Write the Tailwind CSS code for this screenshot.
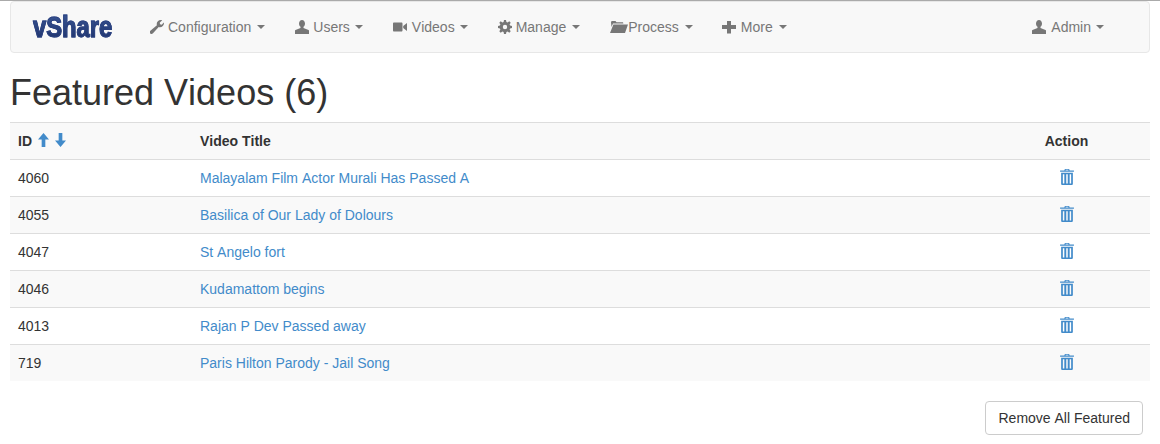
<!DOCTYPE html>
<html lang="en">
  <head>
    <meta charset="UTF-8" />
    <title>Featured Videos</title>
    <script src="https://cdn.jsdelivr.net/npm/@tailwindcss/browser@4"></script>
  </head>
  <body class="bg-white font-['Liberation_Sans',Arial,sans-serif] text-[14px] leading-[20px] text-[#333] [font-kerning:none]">
    <div class="h-px bg-[#aaaaaa]"></div>

    <!-- navbar -->
    <nav class="mx-[10px] flex h-[52px] items-center rounded-[4px] border border-[#e7e7e7] bg-[#f8f8f8] text-[#777]">
      <a class="ml-[22px] mr-[-16px] w-[97px] origin-left scale-x-[0.82] whitespace-nowrap bg-gradient-to-b from-[#3c5a9a] to-[#1c2f66] bg-clip-text text-[29px] font-bold leading-[34px] text-transparent [-webkit-text-stroke:1px_#2a4080]">vShare</a>

      <a class="ml-[36px] flex items-center">
        <svg class="mr-[4px] h-[14px] w-[14px]" viewBox="0 0 14 14" fill="#777"><path d="M14 3.200c0 2.200-1.800 4-4 4-.5 0-.9-.1-1.300-.2L3 13.200c-.8.900-2 .9-2.700.2-.7-.7-.7-1.900.1-2.600L6.900 5.200C6.800 4.800 6.700 4.400 6.700 4c0-2.200 1.800-4 4-4 .6 0 1.100.1 1.500.3L9.700 2.700l.4 1.600 1.600.4 2.100-2.300c.1.100.2.500.2.800z"/></svg>
        Configuration<span class="ml-[6px] h-0 w-0 border-x-[4px] border-t-[4px] border-x-transparent border-t-[#777]"></span>
      </a>
      <a class="ml-[30px] flex items-center">
        <svg class="mr-[4px] h-[14px] w-[14px]" viewBox="0 0 14 14" fill="#777"><path d="M4 3.600C4 1.600 5.300 0 7 0s3 1.600 3 3.600c0 1.400-.6 2.600-1.500 3.200v1.300L13.500 10c.4.200.5.500.5.900V14H0v-3.100c0-.4.100-.7.500-.9l5-1.900V6.800C4.600 6.200 4 5 4 3.600z"/></svg>
        Users<span class="ml-[5px] h-0 w-0 border-x-[4px] border-t-[4px] border-x-transparent border-t-[#777]"></span>
      </a>
      <a class="ml-[30px] flex items-center">
        <svg class="mr-[5px] h-[14px] w-[14px]" viewBox="0 0 14 14" fill="#777"><path d="M0 3.500C0 3 .4 2.500 1 2.500h7.500c.6 0 1 .5 1 1v7c0 .5-.4 1-1 1H1c-.6 0-1-.5-1-1zM10.200 6l3.800-3v8l-3.800-3z"/></svg>
        Videos<span class="ml-[5px] h-0 w-0 border-x-[4px] border-t-[4px] border-x-transparent border-t-[#777]"></span>
      </a>
      <a class="ml-[30px] flex items-center">
        <svg class="mr-[4px] h-[14px] w-[14px]" viewBox="0 0 14 14" fill="#777"><path fill-rule="evenodd" d="M6 0h2l.4 1.900 1.200.5L11.300 1.300l1.400 1.400-1.100 1.700.5 1.200L14 6v2l-1.900.4-.5 1.200 1.100 1.700-1.400 1.400-1.700-1.100-1.200.5L8 14H6l-.4-1.900-1.200-.5-1.700 1.100-1.400-1.400 1.100-1.700-.5-1.200L0 8V6l1.900-.4.500-1.200L1.300 2.700l1.400-1.400 1.700 1.100 1.200-.5zM7 4.800a2.200 2.200 0 1 0 0 4.400 2.200 2.200 0 0 0 0-4.400z"/></svg>
        Manage<span class="ml-[6px] h-0 w-0 border-x-[4px] border-t-[4px] border-x-transparent border-t-[#777]"></span>
      </a>
      <a class="ml-[30px] flex items-center">
        <svg class="h-[14px] w-[18px]" viewBox="0 0 18 14" fill="#777"><path d="M1 2.500 1.500 1h4l1 1.200H13l.4 1.300H3L1.500 7zM3.400 4.500H18L15 13H0z"/></svg>
        Process<span class="ml-[6px] h-0 w-0 border-x-[4px] border-t-[4px] border-x-transparent border-t-[#777]"></span>
      </a>
      <a class="ml-[29px] flex items-center">
        <svg class="mr-[5px] h-[14px] w-[14px]" viewBox="0 0 14 14" fill="#777"><path d="M5 1h4v4h5v4H9v4.500H5V9H0V5h5z"/></svg>
        More<span class="ml-[6px] h-0 w-0 border-x-[4px] border-t-[4px] border-x-transparent border-t-[#777]"></span>
      </a>
      <a class="ml-auto mr-[45px] flex items-center">
        <svg class="mr-[5px] h-[14px] w-[14px]" viewBox="0 0 14 14" fill="#777"><path d="M4 3.600C4 1.600 5.300 0 7 0s3 1.600 3 3.600c0 1.400-.6 2.600-1.500 3.200v1.300L13.500 10c.4.200.5.500.5.900V14H0v-3.100c0-.4.100-.7.500-.9l5-1.900V6.800C4.600 6.200 4 5 4 3.600z"/></svg>
        Admin<span class="ml-[5px] h-0 w-0 border-x-[4px] border-t-[4px] border-x-transparent border-t-[#777]"></span>
      </a>
    </nav>

    <div class="px-[10px]">
      <h1 class="mt-[20px] mb-[9px] text-[36px] font-medium leading-[39.600px] text-[#333]">Featured Videos (6)</h1>

      <table class="w-full border-collapse">
        <thead>
          <tr class="h-[37px] border-y border-[#dddddd] bg-[#f9f9f9]">
            <th class="w-[190px] px-[8px] text-left font-bold">
              <span class="flex items-center">ID
                <svg class="ml-[6px] -mt-[2px] h-[14px] w-[11px]" viewBox="0 0 12 14" fill="#428bca" preserveAspectRatio="none"><path d="M6 0l6 6.500H8V14H4V6.500H0z"/></svg>
                <svg class="ml-[6px] -mt-[2px] h-[14px] w-[11px]" viewBox="0 0 12 14" fill="#428bca" preserveAspectRatio="none"><path d="M6 14L0 7.500h4V0h4v7.500h4z"/></svg>
              </span>
            </th>
            <th class="px-0 text-left font-bold">Video Title</th>
            <th class="w-[167px] text-center font-bold">Action</th>
          </tr>
        </thead>
        <tbody>
          <tr class="h-[37px] border-b border-[#dddddd]">
            <td class="px-[8px]">4060</td>
            <td><a class="text-[#428bca]">Malayalam Film Actor Murali Has Passed A</a></td>
            <td class="text-center"><svg class="mx-auto -mt-[2px] h-[16px] w-[14px]" viewBox="0 0 13 15" fill="#428bca"><path fill-rule="evenodd" d="M4.500 0h4l.5 1.500H13V2.500H0V1.500h4zM5.200 .8v.7h2.600V.8zM1 3.500h11v10.300c0 .7-.5 1.200-1.200 1.200H2.200C1.500 15 1 14.500 1 13.800zM2.600 5v8.500h1.400V5zM5.800 5v8.500h1.400V5zM9 5v8.500h1.400V5z"/></svg></td>
          </tr>
          <tr class="h-[37px] border-b border-[#dddddd] bg-[#f9f9f9]">
            <td class="px-[8px]">4055</td>
            <td><a class="text-[#428bca]">Basilica of Our Lady of Dolours</a></td>
            <td class="text-center"><svg class="mx-auto -mt-[2px] h-[16px] w-[14px]" viewBox="0 0 13 15" fill="#428bca"><path fill-rule="evenodd" d="M4.500 0h4l.5 1.500H13V2.500H0V1.500h4zM5.200 .8v.7h2.600V.8zM1 3.500h11v10.300c0 .7-.5 1.200-1.200 1.200H2.200C1.500 15 1 14.500 1 13.800zM2.600 5v8.500h1.400V5zM5.800 5v8.500h1.400V5zM9 5v8.500h1.400V5z"/></svg></td>
          </tr>
          <tr class="h-[37px] border-b border-[#dddddd]">
            <td class="px-[8px]">4047</td>
            <td><a class="text-[#428bca]">St Angelo fort</a></td>
            <td class="text-center"><svg class="mx-auto -mt-[2px] h-[16px] w-[14px]" viewBox="0 0 13 15" fill="#428bca"><path fill-rule="evenodd" d="M4.500 0h4l.5 1.500H13V2.500H0V1.500h4zM5.200 .8v.7h2.600V.8zM1 3.500h11v10.300c0 .7-.5 1.200-1.200 1.200H2.200C1.500 15 1 14.500 1 13.800zM2.600 5v8.500h1.400V5zM5.800 5v8.500h1.400V5zM9 5v8.500h1.400V5z"/></svg></td>
          </tr>
          <tr class="h-[37px] border-b border-[#dddddd] bg-[#f9f9f9]">
            <td class="px-[8px]">4046</td>
            <td><a class="text-[#428bca]">Kudamattom begins</a></td>
            <td class="text-center"><svg class="mx-auto -mt-[2px] h-[16px] w-[14px]" viewBox="0 0 13 15" fill="#428bca"><path fill-rule="evenodd" d="M4.500 0h4l.5 1.500H13V2.500H0V1.500h4zM5.200 .8v.7h2.600V.8zM1 3.500h11v10.300c0 .7-.5 1.200-1.200 1.200H2.200C1.500 15 1 14.500 1 13.800zM2.600 5v8.500h1.400V5zM5.800 5v8.500h1.400V5zM9 5v8.500h1.400V5z"/></svg></td>
          </tr>
          <tr class="h-[37px] border-b border-[#dddddd]">
            <td class="px-[8px]">4013</td>
            <td><a class="text-[#428bca]">Rajan P Dev Passed away</a></td>
            <td class="text-center"><svg class="mx-auto -mt-[2px] h-[16px] w-[14px]" viewBox="0 0 13 15" fill="#428bca"><path fill-rule="evenodd" d="M4.500 0h4l.5 1.500H13V2.500H0V1.500h4zM5.200 .8v.7h2.600V.8zM1 3.500h11v10.300c0 .7-.5 1.200-1.200 1.200H2.200C1.500 15 1 14.500 1 13.800zM2.600 5v8.500h1.400V5zM5.800 5v8.500h1.400V5zM9 5v8.500h1.400V5z"/></svg></td>
          </tr>
          <tr class="h-[37px] bg-[#f9f9f9]">
            <td class="px-[8px]">719</td>
            <td><a class="text-[#428bca]">Paris Hilton Parody - Jail Song</a></td>
            <td class="text-center"><svg class="mx-auto -mt-[2px] h-[16px] w-[14px]" viewBox="0 0 13 15" fill="#428bca"><path fill-rule="evenodd" d="M4.500 0h4l.5 1.500H13V2.500H0V1.500h4zM5.200 .8v.7h2.600V.8zM1 3.500h11v10.300c0 .7-.5 1.200-1.200 1.200H2.200C1.500 15 1 14.500 1 13.800zM2.600 5v8.500h1.400V5zM5.800 5v8.500h1.400V5zM9 5v8.500h1.400V5z"/></svg></td>
          </tr>
        </tbody>
      </table>

      <div class="mt-[20px] flex justify-end pr-[7px]">
        <button class="h-[34px] rounded-[4px] border border-[#cccccc] bg-white px-[12px] text-[14px] text-[#333]">Remove All Featured</button>
      </div>
    </div>
  </body>
</html>
